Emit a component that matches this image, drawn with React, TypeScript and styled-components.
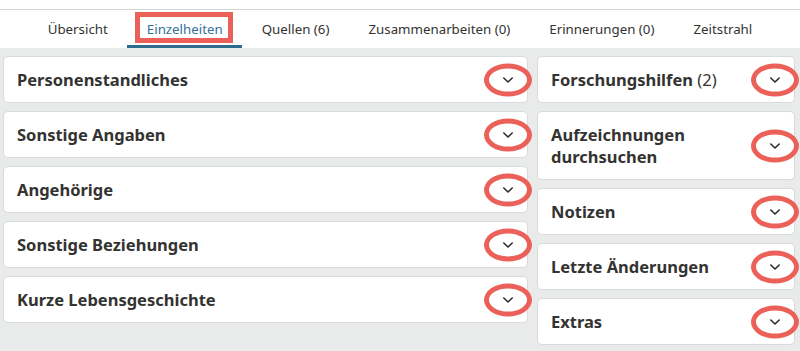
import React from "react";
import styled, { createGlobalStyle } from "styled-components";

const Global = createGlobalStyle`
  html, body { margin: 0; padding: 0; background: #e9eaea; }
  body { font-family: "Noto Sans", "Open Sans", sans-serif; color: #333331; }
  * { box-sizing: border-box; }
`;

const Page = styled.div`
  min-height: 100vh;
  display: flex;
  flex-direction: column;
  background: #e9eaea;
`;

const Header = styled.div`
  background: #ffffff;
  padding-top: 9px;
`;

const TabBar = styled.nav`
  display: flex;
  justify-content: center;
  border-top: 1px solid #d4d5d5;
  height: 39px;
`;

const Tab = styled.div<{ $active?: boolean }>`
  position: relative;
  display: flex;
  align-items: center;
  padding: 3px 19.5px 0;
  font-size: 13.3px;
  color: ${(p) => (p.$active ? "#32739a" : "#333331")};
  border-bottom: 3px solid ${(p) => (p.$active ? "#2f6b8f" : "transparent")};
  white-space: nowrap;
`;

const TabHighlight = styled.span`
  position: absolute;
  left: 8px;
  right: 9px;
  top: 2px;
  bottom: 2px;
  border: 5px solid #eb6159;
  pointer-events: none;
`;

const Content = styled.main`
  display: grid;
  grid-template-columns: 525px 258px;
  column-gap: 9px;
  padding: 8px 5px 8px 3px;
  align-items: start;
`;

const Column = styled.div`
  display: flex;
  flex-direction: column;
  gap: 8px;
`;

const Card = styled.section`
  display: flex;
  align-items: center;
  justify-content: space-between;
  padding: 0 0 0 13px;
  background: #ffffff;
  border: 1px solid #d9dada;
  border-radius: 5px;
`;

const Title = styled.h3`
  margin: 0;
  padding: 11.5px 0;
  font-size: 16.5px;
  line-height: 22px;
  font-weight: 700;
  color: #333331;
`;

const Count = styled.span`
  font-weight: 400;
`;

const ToggleButton = styled.button`
  position: relative;
  flex: none;
  width: 32px;
  height: 32px;
  margin-right: 3px;
  border: none;
  background: transparent;
  display: flex;
  align-items: center;
  justify-content: center;
  padding: 0;
  color: #333331;
`;

const Ring = styled.span`
  position: absolute;
  left: 50%;
  top: 50%;
  width: 48px;
  height: 33px;
  transform: translate(-50%, -50%);
  border: 5px solid #eb6159;
  border-radius: 50%;
  pointer-events: none;
`;

const Chevron = () => (
  <svg width="12" height="8" viewBox="0 0 12 8" fill="none">
    <path d="M1.8 2 L6 6 L10.2 2" stroke="#2b2b2b" strokeWidth="1.6" strokeLinecap="round" strokeLinejoin="round" />
  </svg>
);

const Section = ({ children }: { children: React.ReactNode }) => (
  <Card>
    <Title>{children}</Title>
    <ToggleButton aria-label="aufklappen">
      <Chevron />
      <Ring />
    </ToggleButton>
  </Card>
);

const tabs = ["Übersicht", "Einzelheiten", "Quellen (6)", "Zusammenarbeiten (0)", "Erinnerungen (0)", "Zeitstrahl"];

export default function App() {
  return (
    <>
      <Global />
      <Page>
        <Header>
          <TabBar>
            {tabs.map((t) => (
              <Tab key={t} $active={t === "Einzelheiten"}>
                {t}
                {t === "Einzelheiten" && <TabHighlight />}
              </Tab>
            ))}
          </TabBar>
        </Header>
        <Content>
          <Column>
            <Section>Personenstandliches</Section>
            <Section>Sonstige Angaben</Section>
            <Section>Angehörige</Section>
            <Section>Sonstige Beziehungen</Section>
            <Section>Kurze Lebensgeschichte</Section>
          </Column>
          <Column>
            <Section>
              Forschungshilfen <Count>(2)</Count>
            </Section>
            <Section>
              Aufzeichnungen
              <br />
              durchsuchen
            </Section>
            <Section>Notizen</Section>
            <Section>Letzte Änderungen</Section>
            <Section>Extras</Section>
          </Column>
        </Content>
      </Page>
    </>
  );
}
